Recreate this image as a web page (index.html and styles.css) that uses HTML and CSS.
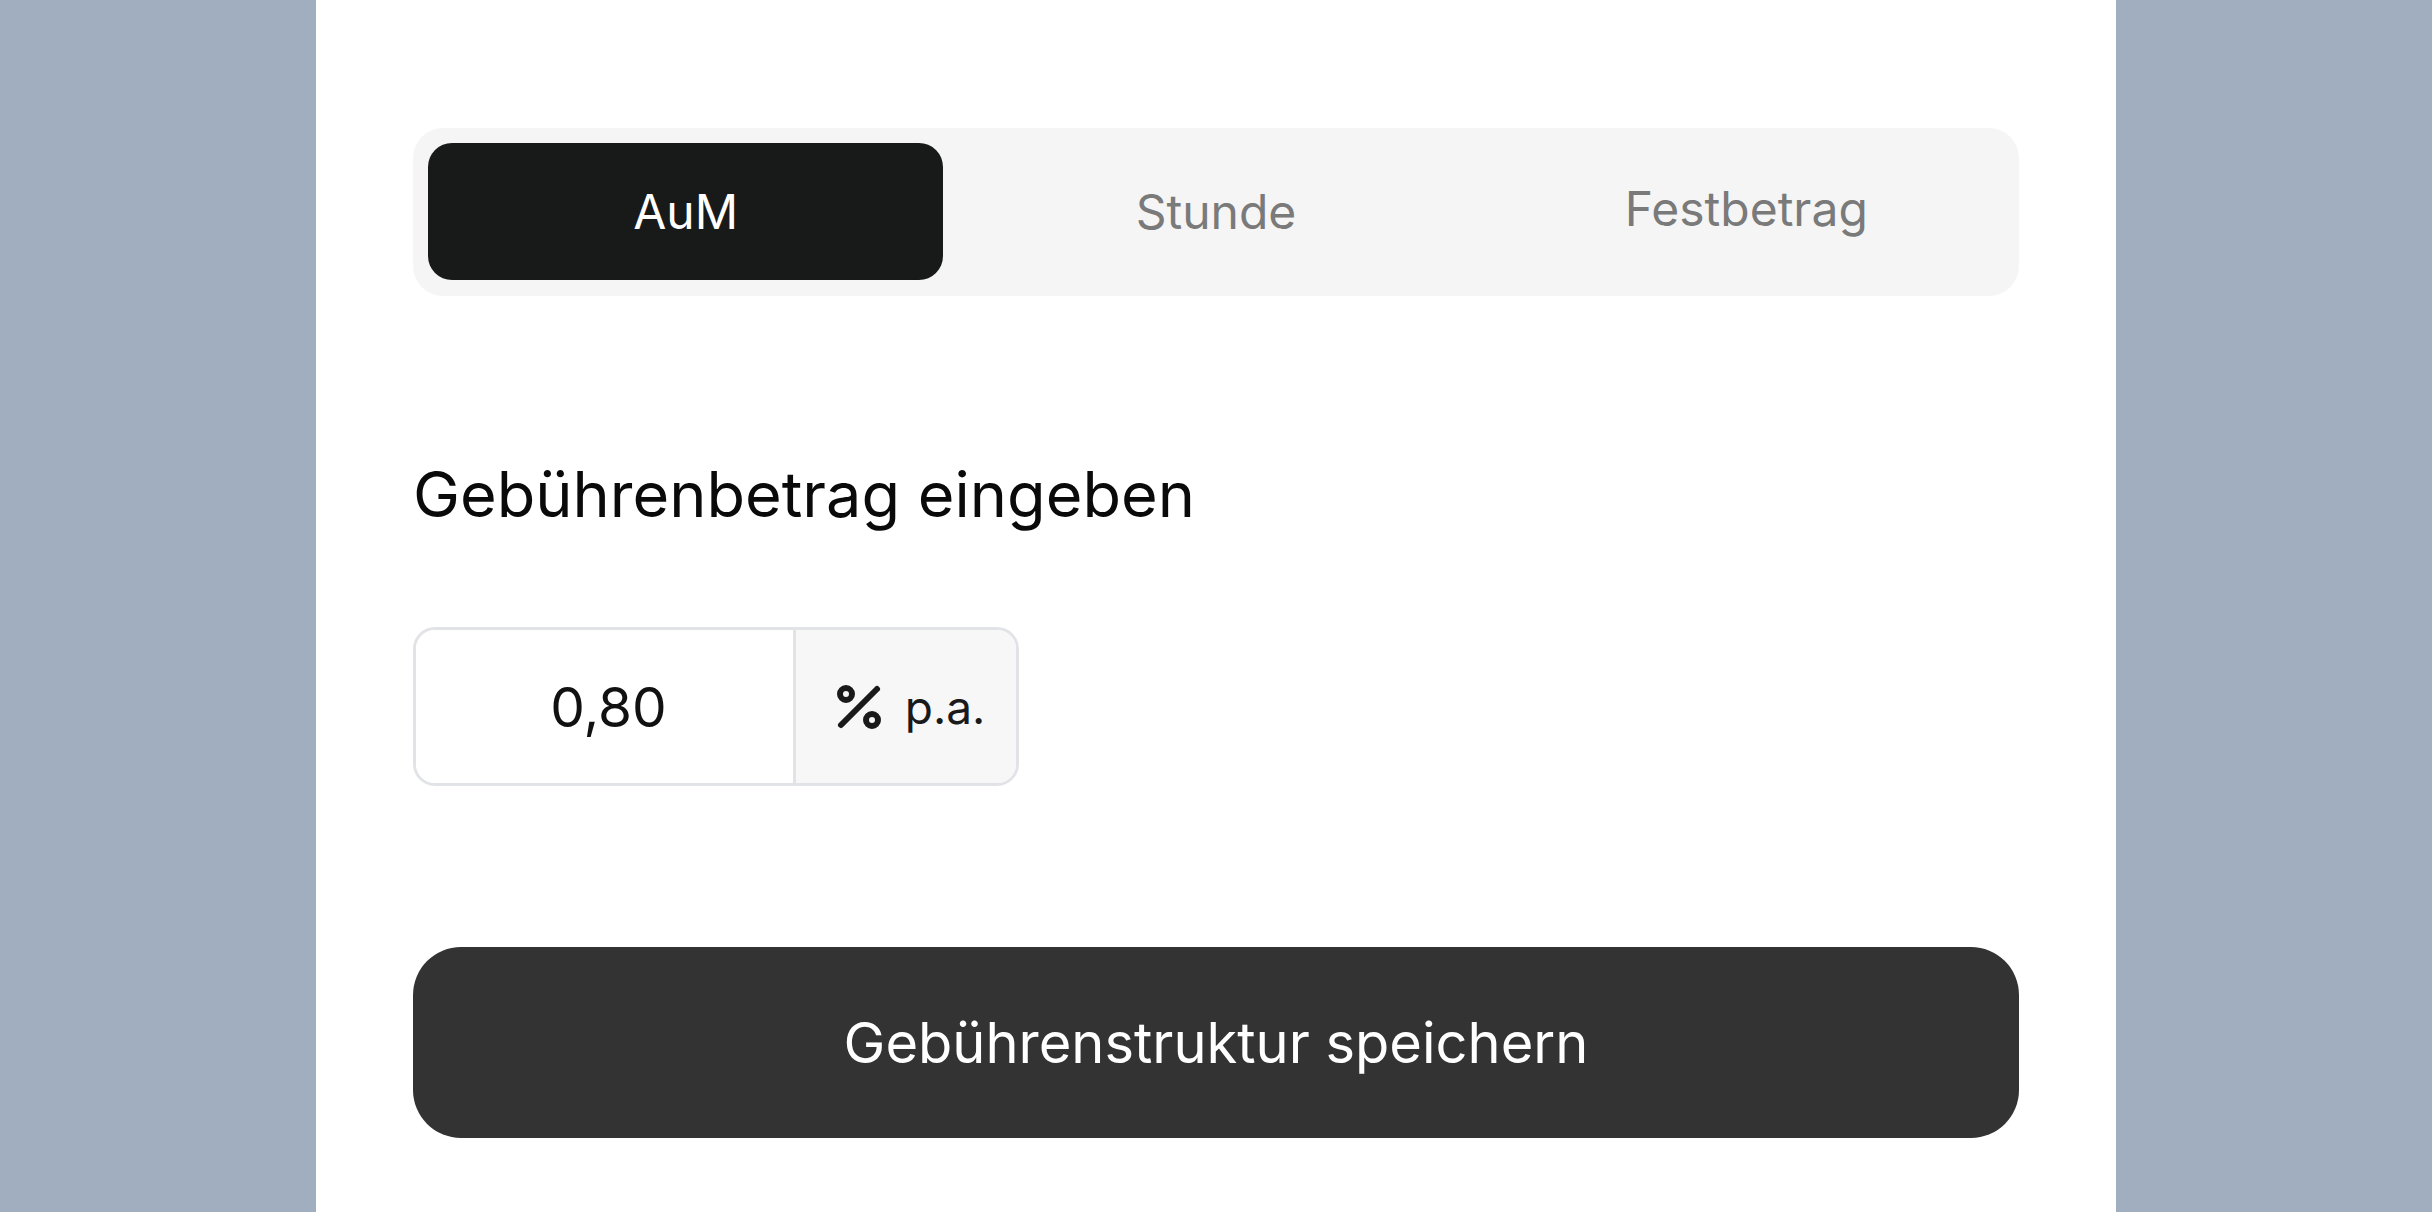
FILE: index.html
```html
<!DOCTYPE html>
<html lang="de">
<head>
<meta charset="utf-8">
<title>Gebührenstruktur</title>
<link rel="stylesheet" href="styles.css">
</head>
<body>
<main class="panel">
  <div class="tabs" role="tablist">
    <button class="tab tab--active" role="tab">AuM</button>
    <button class="tab" role="tab">Stunde</button>
    <button class="tab tab--raised" role="tab">Festbetrag</button>
  </div>
  <h2 class="label">Gebührenbetrag eingeben</h2>
  <div class="field">
    <div class="field__value">0,80</div>
    <div class="field__suffix">
      <svg class="field__icon" viewBox="0 0 256 256" aria-hidden="true">
        <line x1="200" y1="56" x2="56" y2="200"/>
        <circle cx="76" cy="76" r="24"/>
        <circle cx="180" cy="180" r="24"/>
      </svg>
      <span class="field__unit">p.a.</span>
    </div>
  </div>
  <button class="save">Gebührenstruktur speichern</button>
</main>
</body>
</html>
```

FILE: styles.css
```css
html, body {
  margin: 0;
  height: 100%;
}

body {
  background: #a0aec0;
  font-family: Inter, "Noto Sans", sans-serif;
}

.panel {
  width: 1800px;
  min-height: 100vh;
  box-sizing: border-box;
  margin: 0 auto;
  background: #ffffff;
  padding: 128px 97px 0;
  display: flex;
  flex-direction: column;
  align-items: stretch;
}

.tabs {
  display: grid;
  grid-template-columns: repeat(3, 1fr);
  gap: 15px;
  padding: 15px 15px 16px;
  background: #f5f5f5;
  border-radius: 30px;
}

.tab {
  height: 137px;
  border: 0;
  margin: 0;
  padding: 0;
  background: transparent;
  font-family: Inter, "Noto Sans", sans-serif;
  font-weight: 400;
  font-size: 48px;
  color: #7a7a7a;
  border-radius: 24px;
}

.tab--active {
  background: #181a19;
  color: #ffffff;
}

.tab--raised {
  padding-bottom: 7px;
}

.label {
  margin: 162px 0 0;
  font-weight: 400;
  font-size: 63px;
  line-height: 72px;
  color: #0a0a0a;
}

.field {
  margin-top: 97px;
  width: 606px;
  height: 159px;
  box-sizing: border-box;
  border: 3px solid #e1e3e6;
  border-radius: 22px;
  display: flex;
  overflow: hidden;
}

.field__value {
  width: 380px;
  box-sizing: border-box;
  padding-left: 8px;
  border-right: 3px solid #e1e3e6;
  background: #ffffff;
  display: flex;
  align-items: center;
  justify-content: center;
  font-size: 55px;
  font-weight: 400;
  color: #111111;
}

.field__suffix {
  flex: 1;
  background: #f7f7f7;
  display: flex;
  align-items: center;
  justify-content: center;
  gap: 14px;
}

.field__icon {
  width: 64px;
  height: 64px;
  fill: none;
  stroke: #1a1a1a;
  stroke-width: 24;
  stroke-linecap: round;
}

.field__unit {
  font-size: 46px;
  font-weight: 400;
  color: #1a1a1a;
}

.save {
  margin-top: 161px;
  height: 191px;
  border: 0;
  padding: 0;
  border-radius: 48px;
  background: #333333;
  color: #ffffff;
  font-family: Inter, "Noto Sans", sans-serif;
  font-weight: 400;
  font-size: 56px;
}
```
